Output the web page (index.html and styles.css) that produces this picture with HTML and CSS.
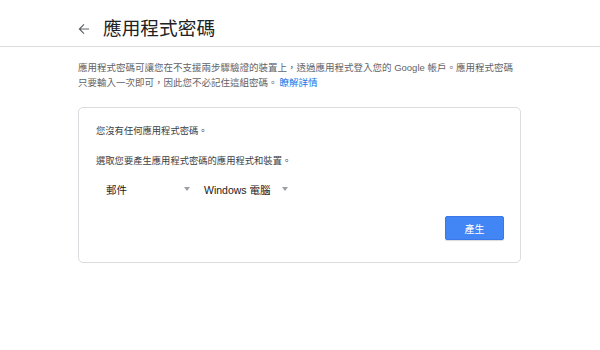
FILE: index.html
```html
<!DOCTYPE html>
<html lang="zh-Hant">
<head>
    <meta charset="UTF-8">
    <meta name="viewport" content="width=device-width, initial-scale=1.0">
    <title>應用程式密碼</title>
    <link rel="stylesheet" href="styles.css">
</head>
<body>
    <header class="top-bar">
        <a href="#" class="back-link" aria-label="返回">
            <svg width="12" height="12" viewBox="0 0 12 12">
                <path d="M11 6H1.6M6 1.4L1.4 6 6 10.6" fill="none" stroke="#5f6368" stroke-width="1.2"/>
            </svg>
        </a>
        <h1>應用程式密碼</h1>
    </header>

    <main class="content">
        <p class="intro">
            應用程式密碼可讓您在不支援兩步驟驗證的裝置上，透過應用程式登入您的 Google 帳戶。應用程式密碼<br>只要輸入一次即可，因此您不必記住這組密碼。<a href="#" class="learn-more">瞭解詳情</a>
        </p>

        <section class="card">
            <p class="card-text">您沒有任何應用程式密碼。</p>
            <p class="card-text">選取您要產生應用程式密碼的應用程式和裝置。</p>

            <div class="selects">
                <div class="select">
                    <span>郵件</span>
                    <span class="caret"></span>
                </div>
                <div class="select">
                    <span>Windows 電腦</span>
                    <span class="caret"></span>
                </div>
            </div>

            <div class="actions">
                <button type="button" class="generate">產生</button>
            </div>
        </section>
    </main>
</body>
</html>
```

FILE: styles.css
```css
body {
    margin: 0;
    font-family: Arial, "Liberation Sans", "Noto Sans CJK TC", sans-serif;
    background-color: #fff;
    color: #202124;
}
.top-bar {
    display: flex;
    align-items: center;
    height: 47px;
    box-sizing: border-box;
    padding: 12px 0 0 78px;
    border-bottom: 1px solid #dadce0;
}
.back-link {
    display: flex;
    width: 12px;
    height: 12px;
    margin-right: 13px;
}
.top-bar h1 {
    margin: 0;
    font-size: 18.7px;
    font-weight: 400;
    line-height: 24px;
    color: #202124;
}
.content {
    width: 443px;
    margin-left: 78px;
}
.intro {
    margin: 13px 0 17px;
    font-size: 9.5px;
    line-height: 15px;
    color: #5f6368;
}
.learn-more {
    color: #1a73e8;
    text-decoration: none;
    margin-left: 2px;
}
.card {
    display: flex;
    flex-direction: column;
    border: 1px solid #dadce0;
    border-radius: 5px;
    padding: 16px 16px 22px 17px;
}
.card-text {
    margin: 0 0 15px;
    font-size: 9.3px;
    line-height: 15px;
    color: #3c4043;
}
.card-text + .card-text {
    margin-bottom: 8px;
}
.selects {
    display: flex;
}
.select {
    display: flex;
    align-items: center;
    justify-content: space-between;
    width: 98px;
    height: 24px;
    box-sizing: border-box;
    padding: 0 4px 0 10px;
    font-size: 10.5px;
    color: #202124;
}
.caret {
    width: 0;
    height: 0;
    border-left: 3.5px solid transparent;
    border-right: 3.5px solid transparent;
    border-top: 4px solid #9aa0a6;
}
.actions {
    display: flex;
    justify-content: flex-end;
    margin-top: 15px;
}
.generate {
    width: 59px;
    height: 24px;
    padding: 0;
    border: 1px solid #3b78e7;
    border-radius: 2px;
    background-color: #4285f4;
    color: #fff;
    font-family: inherit;
    font-size: 10px;
    box-shadow: 0 1px 1px rgba(0,0,0,0.15);
    cursor: pointer;
}
```
